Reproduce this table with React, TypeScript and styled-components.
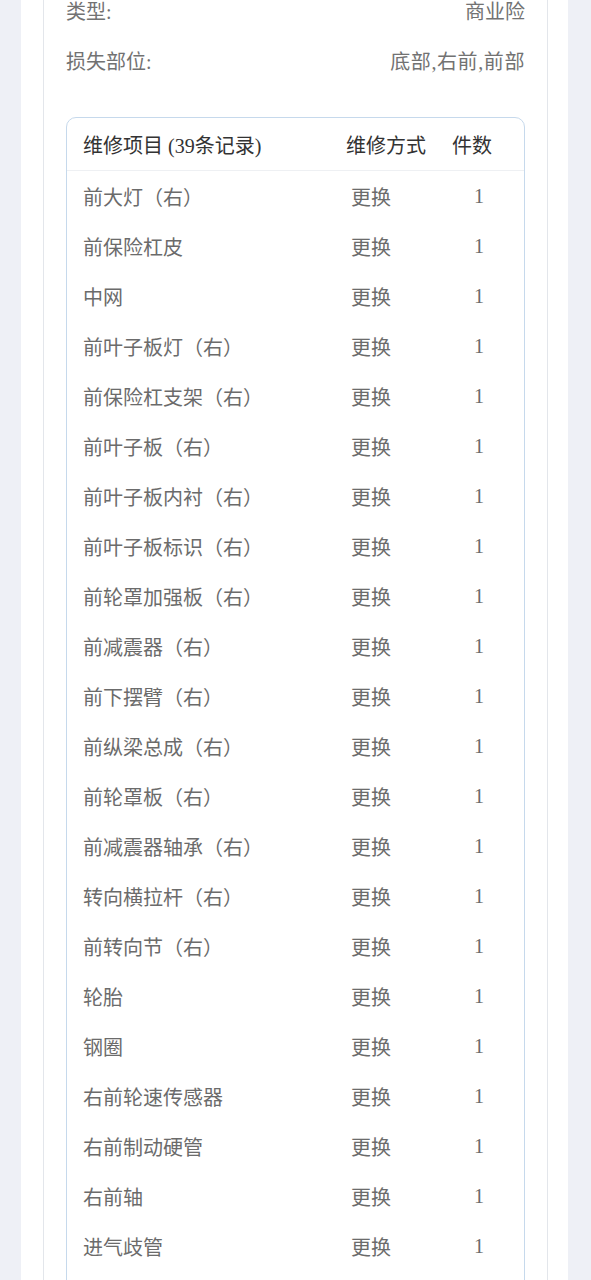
import React from 'react';
import styled, { createGlobalStyle } from 'styled-components';

const GlobalStyle = createGlobalStyle`
  html, body {
    margin: 0;
    padding: 0;
    background: #eef0f6;
  }
  body {
    font-family: "Liberation Serif", "Noto Sans CJK SC", serif;
    -webkit-font-smoothing: antialiased;
  }
`;

const Page = styled.div`
  width: 591px;
  height: 1280px;
  overflow: hidden;
  padding: 0 23px 0 21px;
  box-sizing: border-box;
`;
const Sheet = styled.div`
  background: #fff;
  padding: 0 20px 0 22px;
  min-height: 100%;
`;
const Card = styled.div`
  border-left: 1px solid #e3e6eb;
  border-right: 1px solid #e3e6eb;
  padding: 0 22px 0 22px;
  min-height: 1400px;
`;
const InfoList = styled.div`
  margin-top: -15px;
`;
const InfoRow = styled.div`
  display: flex;
  justify-content: space-between;
  align-items: center;
  height: 50px;
  font-size: 20px;
  color: #727272;
`;
const Value = styled.span`
  letter-spacing: 0.6px;
`;
const Table = styled.div`
  margin-top: 32px;
  border: 1px solid #c6d9ec;
  border-radius: 10px;
  padding-bottom: 60px;
`;
const HeadRow = styled.div`
  display: grid;
  grid-template-columns: 1fr 106px 72px;
  align-items: center;
  height: 52px;
  padding-left: 16px;
  border-bottom: 1px solid #eef0f3;
  font-size: 20px;
  color: #333;
`;
const BodyRow = styled.div`
  display: grid;
  grid-template-columns: 1fr 106px 72px;
  align-items: center;
  height: 50px;
  padding-left: 16px;
  font-size: 20px;
  color: #6b6b6b;
`;
const Cell = styled.div<{ $pad?: number }>`
  padding-left: ${(p) => p.$pad ?? 0}px;
  white-space: nowrap;
`;

const items = [
  '前大灯（右）',
  '前保险杠皮',
  '中网',
  '前叶子板灯（右）',
  '前保险杠支架（右）',
  '前叶子板（右）',
  '前叶子板内衬（右）',
  '前叶子板标识（右）',
  '前轮罩加强板（右）',
  '前减震器（右）',
  '前下摆臂（右）',
  '前纵梁总成（右）',
  '前轮罩板（右）',
  '前减震器轴承（右）',
  '转向横拉杆（右）',
  '前转向节（右）',
  '轮胎',
  '钢圈',
  '右前轮速传感器',
  '右前制动硬管',
  '右前轴',
  '进气歧管',
];

const App = () => {
  return (
    <Page>
      <GlobalStyle />
      <Sheet>
        <Card>
          <InfoList>
            <InfoRow>
              <span>类型:</span>
              <span>商业险</span>
            </InfoRow>
            <InfoRow>
              <span>损失部位:</span>
              <Value>底部,右前,前部</Value>
            </InfoRow>
          </InfoList>
          <Table>
            <HeadRow>
              <Cell>维修项目 (39条记录)</Cell>
              <Cell>维修方式</Cell>
              <Cell>件数</Cell>
            </HeadRow>
            {items.map((name) => (
              <BodyRow key={name}>
                <Cell>{name}</Cell>
                <Cell $pad={5}>更换</Cell>
                <Cell $pad={22}>1</Cell>
              </BodyRow>
            ))}
          </Table>
        </Card>
      </Sheet>
    </Page>
  );
};

export default App;
